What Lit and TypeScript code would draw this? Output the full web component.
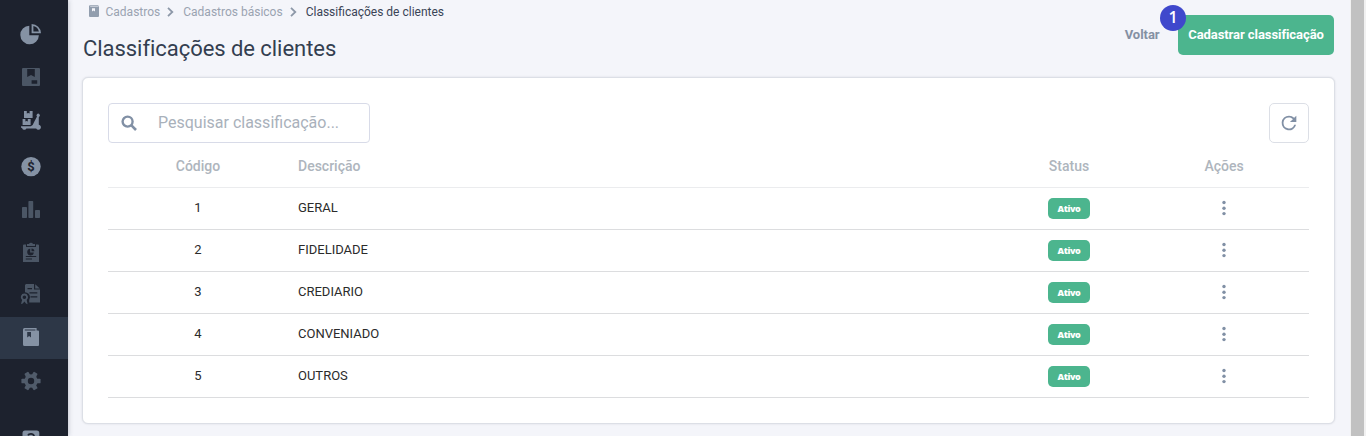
import { LitElement, html, svg, css } from "lit";
import { customElement, property } from "lit/decorators.js";
import { classMap } from "lit/directives/class-map.js";

const menu = [
  {
    top: 14, tone: "light", label: "Painel",
    art: svg`<path d="M29.3 25.7V35.3H38.9A9.3 9.3 0 1 1 29.3 25.7Z"/>
      <path fill-rule="evenodd" d="M31.6 24A9.3 9.3 0 0 1 41 33.2H31.6ZM33.4 26V31.4H38.9A7.4 7.4 0 0 0 33.4 26Z"/>`,
  },
  {
    top: 58, tone: "dim", label: "Produtos",
    art: svg`<rect x="22" y="68" width="18" height="18" rx="1"/>
      <path class="cut" d="M27.2 69H34.8V77L31 75 27.2 77ZM31.6 80.2H37.2V83.8H31.6Z"/>`,
  },
  {
    top: 101, tone: "light", label: "Entregas",
    art: svg`<path d="M24 111H26.8V113.6L28.2 113 29.6 113.6V111H32.6V118H24ZM22.6 119H25.4V121.6L26.6 121 27.8 121.6V119H30.6V125H22.6Z"/>
      <path d="M21 126.2H30.8Q33 125.6 34 122.2L37 116.6A1.7 1.7 0 1 1 39.4 116.6L38.8 117.2V124.8A2.5 2.5 0 1 1 36.2 128.4H26.4A2.2 2.2 0 0 1 22.2 128.2L21 127.6Z"/>`,
  },
  {
    top: 144, tone: "light", label: "Financeiro",
    art: svg`<circle cx="31" cy="166.6" r="9.7"/>
      <text class="cut money" x="30.9" y="171.4" text-anchor="middle">$</text>`,
  },
  {
    top: 187, tone: "dim", label: "Relatórios",
    art: svg`<rect x="22" y="207" width="5" height="11" rx=".7"/><rect x="28.4" y="201" width="4.8" height="17" rx=".7"/><rect x="35" y="210" width="5" height="8" rx=".7"/>`,
  },
  {
    top: 231, tone: "dim", label: "Pedidos",
    art: svg`<path d="M24 244.5H26V247H36V244.5H38Q39 244.5 39 245.5V262H23V245.5Q23 244.5 24 244.5Z"/>
      <path d="M27 244H29A2.2 2.2 0 0 1 33 244H35V246H27Z"/>
      <path class="cut" d="M30.2 248.8V252.4H33.8A3.3 3.3 0 1 1 30.2 248.8ZM31.5 248.4A3 3 0 0 1 34.4 251.2H31.5ZM25.8 256H36.2V257.1H25.8ZM25.8 258.5H32V259.6H25.8Z"/>`,
  },
  {
    top: 274, tone: "dim", label: "Fiscal",
    art: svg`<path d="M26 284H34V289.5H40V302.5H29.2V300L30 297.5A5 5 0 0 0 25 292.3V285ZM35.2 284.2L39.8 288.4H35.2Z"/>
      <path class="cut" d="M27.5 288H32V289.2H27.5ZM29.5 292.2H37.3V293.5H29.5ZM30.5 296.2H37.3V297.5H30.5Z"/>
      <path fill-rule="evenodd" d="M24.4 293.6A3.6 3.6 0 0 1 26.7 300L27.6 304.2 26 303.4 24.4 301.5 22.8 303.6 21 304 22.1 300A3.6 3.6 0 0 1 24.4 293.6ZM24.4 295.4A1.8 1.8 0 1 0 24.4 299 1.8 1.8 0 0 0 24.4 295.4Z"/>`,
  },
  {
    top: 317, tone: "light", label: "Cadastros",
    art: svg`<path fill-rule="evenodd" d="M24.5 328H36.6V330.6H38Q39 330.6 39 331.6V345Q39 346 38 346H24.5Q23 346 23 344.5V329.5Q23 328 24.5 328ZM24.8 329.4V330.6H35.4V329.4Z"/>
      <path class="cut" d="M27.2 332H31V337.6L29.1 336 27.2 337.6Z"/>`,
  },
  {
    top: 361, tone: "mid", label: "Configurações",
    art: svg`<g transform="translate(31 381)"><circle r="6.7"/>
      ${[30, 90, 150, 210, 270, 330].map((a) => svg`<rect x="-2.3" y="-9.6" width="4.6" height="5" rx=".9" transform="rotate(${a})"/>`)}
      <circle class="cut" r="3.2"/></g>`,
  },
  {
    top: 404, tone: "light", label: "Ajuda",
    art: svg`<rect x="22.5" y="430.5" width="16.8" height="16" rx="2.5"/>
      <path class="line" d="M28 435.4Q28.6 433.8 31 433.8T34 436 31.5 439"/>`,
  },
];

@customElement("side-menu")
class SideMenu extends LitElement {
  static styles = css`
    :host { display: block; width: 68px; flex: none; background: #1d222e; box-shadow: 0 0 5px rgba(40, 50, 70, .3); z-index: 1; overflow: hidden; }
    nav { display: grid; padding-top: 14px; grid-template-rows: 44px 43px 43px 43px 44px 43px 43px 44px 43px 43px; }
    .item { height: 42px; --bg: #1d222e; }
    .active { background: #2d3747; --bg: #2d3747; }
    svg { display: block; }
    .light { fill: #8592a4; }
    .mid { fill: #515c6b; }
    .dim { fill: #4b5665; }
    .cut { fill: var(--bg); }
    .line { fill: none; stroke: var(--bg); stroke-width: 1.8; }
    .money { font: 700 13px Roboto, sans-serif; }
  `;
  render() {
    return html`<nav>${menu.map((m) => html`
      <div class=${classMap({ item: true, active: m.top === 317 })}>
        <svg class=${m.tone} width="68" height="42" viewBox="0 ${m.top} 68 42" aria-label=${m.label}>${m.art}</svg>
      </div>`)}</nav>`;
  }
}

@customElement("class-table")
class ClassTable extends LitElement {
  @property({ attribute: false }) rows: string[] = [];
  static styles = css`
    :host { display: block; }
    .row { display: grid; grid-template-columns: 180px 681px 200px 110px; height: 41px; align-items: center; border-bottom: 1px solid #dcdddf; font-size: 13px; color: #2b2b2b; }
    .row > * { padding-bottom: 3px; }
    .head { height: 44px; border-color: #ebecee; font-size: 14px; font-weight: 500; color: #aeb5bd; }
    .head > * { padding-bottom: 0; padding-top: 2px; }
    .center { text-align: center; }
    .row .name { padding-left: 10px; }
    .row .status, .row .actions { display: flex; justify-content: center; padding-bottom: 0; }
    .row .actions { padding-bottom: 2px; }
    .badge { width: 42px; height: 21px; border-radius: 5px; background: #4cb58e; color: #fff; font: 800 9px/22px "Open Sans", sans-serif; text-align: center; letter-spacing: -.4px; }
    svg { display: block; fill: #8190a5; }
  `;
  render() {
    return html`
      <div class="row head"><span class="center">Código</span><span class="name">Descrição</span><span class="center">Status</span><span class="center">Ações</span></div>
      ${this.rows.map((r, i) => html`
        <div class="row">
          <span class="center">${i + 1}</span><span class="name">${r}</span>
          <span class="status"><span class="badge">Ativo</span></span>
          <span class="actions"><svg width="6" height="18" viewBox="0 0 6 18"><circle cx="3" cy="3.5" r="1.7"/><circle cx="3" cy="9.2" r="1.7"/><circle cx="3" cy="14.6" r="1.7"/></svg></span>
        </div>`)}`;
  }
}

@customElement("app-root")
class AppRoot extends LitElement {
  static styles = css`
    :host { display: flex; width: 1366px; height: 436px; overflow: hidden; background: #f4f5fa; font-family: Roboto, sans-serif; }
    * { box-sizing: border-box; }
    svg { display: block; flex: none; }
    main { flex: 1; padding: 0 15px 0 14px; min-width: 0; }
    header { display: flex; justify-content: space-between; height: 77px; padding-right: 1px; }
    .crumbs { display: flex; align-items: center; height: 14px; margin-top: 5px; padding-left: 7px; font-size: 12px; line-height: 14px; color: #9aa3b1; white-space: nowrap; }
    .book { margin-right: 6.5px; margin-bottom: 3px; }
    .sep { margin: 0 9px 0 7px; }
    .last { color: #3a4456; }
    h1 { margin: 17px 0 0 1px; font-size: 22px; line-height: 26px; font-weight: 400; color: #333e50; white-space: nowrap; letter-spacing: -.05px; }
    .buttons { display: flex; margin-top: 15px; height: 40px; line-height: 40px; font-size: 13px; font-weight: 700; }
    .back { color: #8490a3; margin-right: 18.5px; letter-spacing: -.05px; }
    .create { position: relative; width: 156px; border-radius: 5px; background: #4cb58e; color: #fff; text-align: center; white-space: nowrap; letter-spacing: -.07px; }
    .step { position: absolute; left: -18px; top: -10px; width: 26px; height: 26px; border-radius: 50%; background: #3f48cc; font: 600 16px/25px "Open Sans", sans-serif; }
    .card { height: 347px; padding: 25px; border: 1px solid #dcdfe6; border-radius: 6px; background: #fff; box-shadow: 0 0 2px rgba(60, 70, 90, .16); }
    .tools { display: flex; justify-content: space-between; height: 40px; }
    .search { display: flex; align-items: center; width: 262px; border: 1px solid #d8dbe8; border-radius: 4px; padding-left: 12px; color: #a9b1bb; font-size: 16px; }
    .search span { margin-left: 21px; padding-bottom: 1px; white-space: nowrap; }
    .reload { display: flex; align-items: center; justify-content: center; width: 40px; border: 1px solid #dcdfe6; border-radius: 5px; }
    .scroll { width: 16px; flex: none; padding: 0 2px 0 1px; background: #f1f1f1; }
    .thumb { height: 100%; background: #c1c1c1; }
  `;
  render() {
    const chevron = html`<svg class="sep" width="7" height="10" viewBox="0 0 7 10" fill="none" stroke="#8d98a8" stroke-width="1.8"><path d="M1 .8 5.3 5 1 9.2"/></svg>`;
    return html`
      <side-menu></side-menu>
      <main>
        <header>
          <div>
            <div class="crumbs">
              <svg class="book" width="10" height="12" viewBox="0 0 10 12"><path fill="#929eae" fill-rule="evenodd" d="M1 .2H9.4V1.4H10V11Q10 12 9 12H1Q0 12 0 11V1.2Q0 .2 1 .2ZM1.2 1.4V2H9V1.4ZM3 3.2V6.5L4.5 5.5 6 6.5V3.2Z"/></svg>
              <span>Cadastros</span>${chevron}<span>Cadastros básicos</span>${chevron}<span class="last">Classificações de clientes</span>
            </div>
            <h1>Classificações de clientes</h1>
          </div>
          <div class="buttons">
            <span class="back">Voltar</span>
            <span class="create">Cadastrar classificação<span class="step">1</span></span>
          </div>
        </header>
        <section class="card">
          <div class="tools">
            <div class="search">
              <svg width="16" height="16" viewBox="0 0 16 16" fill="none" stroke="#8190a5"><circle cx="6.6" cy="6.6" r="5" stroke-width="2.4"/><path d="M10.2 10.2 15 15" stroke-width="2.6"/></svg>
              <span>Pesquisar classificação...</span>
            </div>
            <div class="reload"><svg width="22" height="22" viewBox="0 0 24 24" fill="#8190a5"><path d="M17.65 6.35A7.96 7.96 0 0 0 12 4a8 8 0 1 0 7.73 10h-2.08A6 6 0 1 1 12 6c1.66 0 3.14.69 4.22 1.78L13 11h7V4z"/></svg></div>
          </div>
          <class-table .rows=${["GERAL", "FIDELIDADE", "CREDIARIO", "CONVENIADO", "OUTROS"]}></class-table>
        </section>
      </main>
      <div class="scroll"><div class="thumb"></div></div>`;
  }
}
